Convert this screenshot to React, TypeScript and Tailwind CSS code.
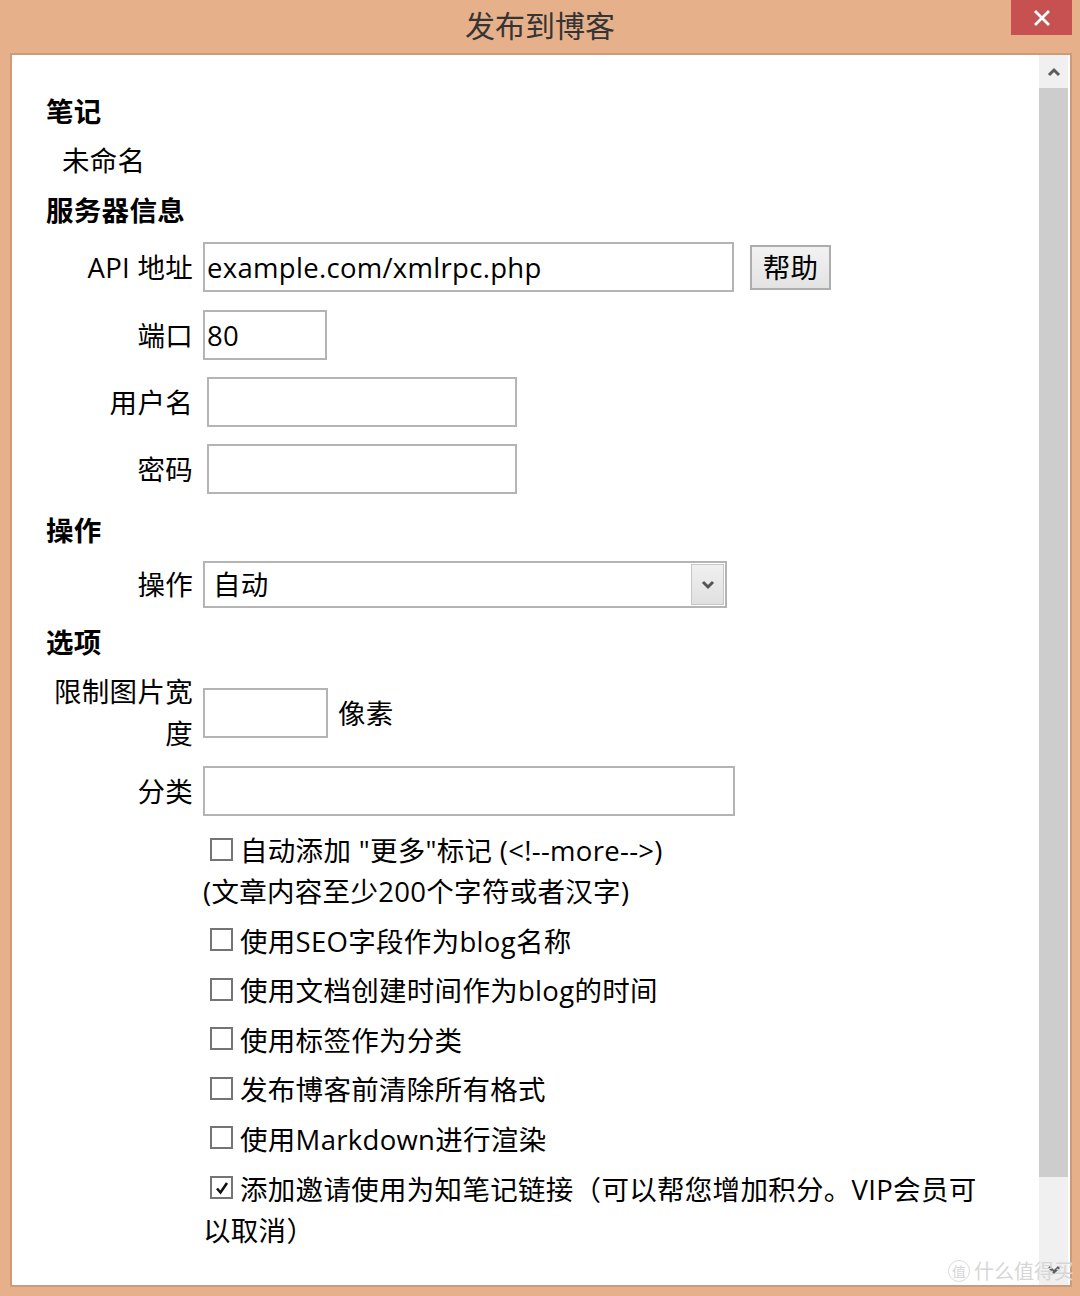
import React from "react";

const FONT = { fontFamily: '"Open Sans", "Noto Sans CJK SC", sans-serif' };

function Heading({ children, className = "" }: { children: React.ReactNode; className?: string }) {
  return <div className={`h-[50px] flex items-center font-bold text-black ${className}`}>{children}</div>;
}

function Label({ children }: { children: React.ReactNode }) {
  return <div className="w-[147px] shrink-0 text-right text-black whitespace-nowrap">{children}</div>;
}

function Input({ w, value = "", className = "" }: { w: string; value?: string; className?: string }) {
  return (
    <div className={`h-[50px] border-2 border-[#b4b4b4] bg-white flex items-center pl-[2px] text-black whitespace-nowrap ${w} ${className}`}>
      {value}
    </div>
  );
}

function Box({ checked = false }: { checked?: boolean }) {
  return (
    <div className="w-[23px] h-[23px] border-2 border-[#747474] bg-white shrink-0 ml-[7px] mr-[7px] mt-[-3px] flex items-center justify-center">
      {checked && (
        <svg width="16" height="16" viewBox="0 0 16 16">
          <path d="M3 8.5 L6.5 12.5 L13 3" fill="none" stroke="#111" strokeWidth="2.6" />
        </svg>
      )}
    </div>
  );
}

function Check({ checked = false, children }: { checked?: boolean; children: React.ReactNode }) {
  return (
    <div className="flex items-center whitespace-nowrap">
      <Box checked={checked} />
      <span>{children}</span>
    </div>
  );
}

export default function App() {
  return (
    <div className="w-[1080px] h-[1296px] bg-[#e6b08a] flex flex-col overflow-hidden" style={FONT}>
      {/* title bar */}
      <div className="h-[53px] relative flex items-start justify-center shrink-0">
        <div className="mt-[4px] text-[30px] leading-[40px] text-[#353535]" style={{ fontFamily: '"Noto Sans CJK SC", sans-serif' }}>
          发布到博客
        </div>
        <div className="absolute right-[8px] top-0 w-[61px] h-[35px] bg-[#c75050] flex items-center justify-center">
          <svg width="16" height="16" viewBox="0 0 16 16">
            <path d="M2 2 L14 14 M14 2 L2 14" stroke="#fff" strokeWidth="2.8" strokeLinecap="square" />
          </svg>
        </div>
      </div>

      {/* panel */}
      <div className="ml-[10px] w-[1062px] h-[1234px] border-2 border-[#cf9a78] bg-white flex relative shrink-0">
        <div className="flex-1 pl-[34px] pt-[31px] text-[27.5px] tracking-[0.3px] leading-[41px] text-black">
          <Heading>笔记</Heading>
          <div className="h-[50px] flex items-center pl-[16px] mt-[-1px]">未命名</div>
          <Heading>服务器信息</Heading>

          <div className="flex items-center mt-[7px]">
            <Label>API 地址</Label>
            <Input w="w-[531px]" value="example.com/xmlrpc.php" className="ml-[10px]" />
            <div className="ml-[16px] w-[81px] h-[45px] border-2 border-[#adadad] bg-gradient-to-b from-[#f2f2f2] to-[#e3e3e3] flex items-center justify-center">
              帮助
            </div>
          </div>
          <div className="flex items-center mt-[18px]">
            <Label>端口</Label>
            <Input w="w-[124px]" value="80" className="ml-[10px]" />
          </div>
          <div className="flex items-center mt-[17px]">
            <Label>用户名</Label>
            <Input w="w-[310px]" className="ml-[14px]" />
          </div>
          <div className="flex items-center mt-[17px]">
            <Label>密码</Label>
            <Input w="w-[310px]" className="ml-[14px]" />
          </div>

          <Heading className="mt-[11px]">操作</Heading>
          <div className="flex items-center mt-[6px]">
            <Label>操作</Label>
            <div className="ml-[10px] w-[524px] h-[47px] border-2 border-[#b4b4b4] bg-white flex items-center justify-between">
              <span className="pl-[8px]">自动</span>
              <div className="w-[33px] h-[41px] mr-[1px] border border-[#c6c6c6] bg-gradient-to-b from-[#f0f0f0] to-[#e0e0e0] flex items-center justify-center">
                <svg width="14" height="10" viewBox="0 0 14 10">
                  <path d="M2 2 L7 7 L12 2" fill="none" stroke="#555" strokeWidth="3" />
                </svg>
              </div>
            </div>
          </div>

          <Heading className="mt-[9px]">选项</Heading>
          <div className="flex items-center mt-[4px]">
            <div className="w-[147px] shrink-0 text-right leading-[42px] pl-[6px]">限制图片宽度</div>
            <Input w="w-[125px]" className="ml-[10px]" />
            <span className="ml-[10px]">像素</span>
          </div>
          <div className="flex items-center mt-[11px]">
            <Label>分类</Label>
            <Input w="w-[532px]" className="ml-[10px]" />
          </div>

          <div className="ml-[157px] mt-[14px] flex flex-col gap-[8.6px]">
            <div>
              <Check>自动添加 "更多"标记 (&lt;!--more--&gt;)</Check>
              <div className="whitespace-nowrap">(文章内容至少200个字符或者汉字)</div>
            </div>
            <Check>使用SEO字段作为blog名称</Check>
            <Check>使用文档创建时间作为blog的时间</Check>
            <Check>使用标签作为分类</Check>
            <Check>发布博客前清除所有格式</Check>
            <Check>使用Markdown进行渲染</Check>
            <div>
              <Check checked>添加邀请使用为知笔记链接（可以帮您增加积分。VIP会员可</Check>
              <div className="whitespace-nowrap">以取消）</div>
            </div>
          </div>
        </div>

        {/* scrollbar */}
        <div className="w-[29px] mr-[2px] bg-[#f0f0f0] flex flex-col shrink-0">
          <div className="h-[33px] flex items-center justify-center">
            <svg width="14" height="10" viewBox="0 0 14 10">
              <path d="M2 8 L7 3 L12 8" fill="none" stroke="#5c5c5c" strokeWidth="3" />
            </svg>
          </div>
          <div className="h-[1089px] bg-[#cdcdcd]" />
          <div className="flex-1" />
          <div className="h-[30px] flex items-center justify-center">
            <svg width="14" height="10" viewBox="0 0 14 10">
              <path d="M2 2 L7 7 L12 2" fill="none" stroke="#5c5c5c" strokeWidth="3" />
            </svg>
          </div>
        </div>

        {/* watermark */}
        <div
          className="absolute right-[-4px] bottom-[2px] flex items-center gap-[4px] text-[20px] leading-[24px] text-[#d6d6d6]"
          style={{ fontFamily: '"Noto Sans CJK SC", sans-serif' }}
        >
          <span className="w-[22px] h-[22px] rounded-full border border-[#dcdcdc] text-[14px] leading-[20px] flex items-center justify-center">值</span>
          <span>什么值得买</span>
        </div>
      </div>
    </div>
  );
}
